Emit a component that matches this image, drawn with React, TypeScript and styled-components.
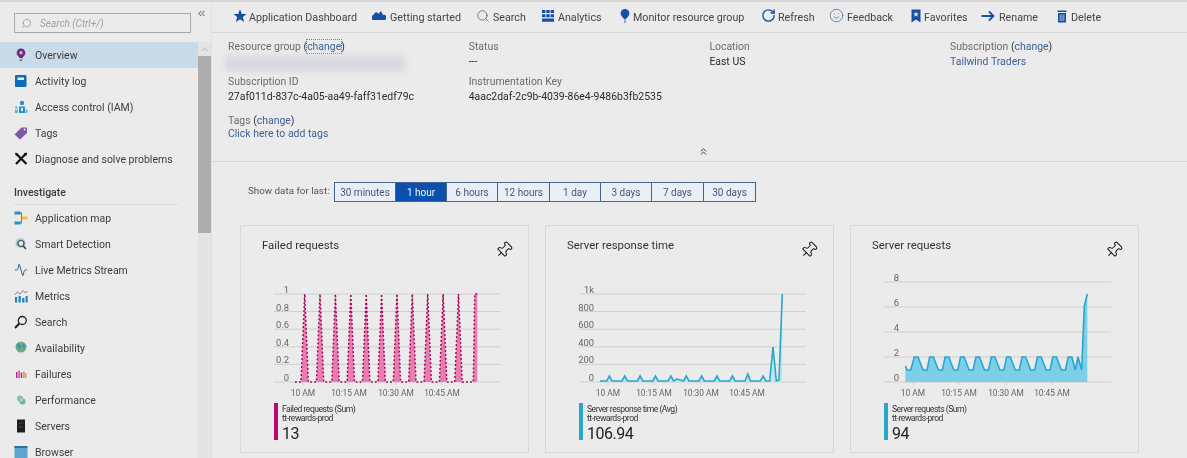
import React from 'react';
import styled, { createGlobalStyle } from 'styled-components';
import { Activity, ChevronUp, ChevronsLeft, ChevronsUp, Pin, RotateCw, Search as SearchIcon, Smile } from 'lucide-react';

const GlobalStyle = createGlobalStyle`
  html, body { margin: 0; padding: 0; background: #ebebeb; }
  body { font-family: Roboto, "Noto Sans", Arial, sans-serif; color: #333; }
  * { box-sizing: border-box; }
`;

const Page = styled.div`
  display: flex;
  width: 1187px;
  height: 458px;
  overflow: hidden;
  background: #ebebeb;
  border-top: 2px solid #d6d6d6;
  filter: blur(0.3px);
`;

const Sidebar = styled.aside`
  display: flex;
  flex: 0 0 212px;
  flex-direction: column;
  height: 456px;
  overflow: hidden;
  border-right: 1px solid #e0e0e0;
`;

const SearchRow = styled.div`
  display: flex;
  flex: 0 0 40px;
  align-items: flex-start;
  padding: 11px 0 0 14px;
`;

const SearchBox = styled.div`
  display: flex;
  align-items: center;
  gap: 8px;
  width: 177px;
  height: 20px;
  padding-left: 6px;
  border: 1px solid #a9a9a9;
  color: #a0a0a0;
  font-size: 10px;
  font-style: italic;
`;

const Collapse = styled.span`
  display: flex;
  margin: -5px 0 0 5px;
  color: #444;
`;

const SideBody = styled.div`
  display: flex;
  flex: 0 0 auto;
`;

const NavList = styled.nav`
  flex: 0 0 198px;
  display: flex;
  flex-direction: column;
`;

const NavItem = styled.div<{ $active?: boolean }>`
  display: flex;
  flex: 0 0 26px;
  align-items: center;
  gap: 7px;
  padding-left: 14px;
  background: ${(p) => (p.$active ? '#c9dbe9' : 'transparent')};
  color: #3c3c3c;
  font-size: 10.5px;
  white-space: nowrap;
`;

const NavIcon = styled.svg`
  flex: 0 0 14px;
  width: 14px;
  height: 14px;
`;

const NavHeading = styled.div`
  margin: 14px 20px 0 14px;
  padding-bottom: 5px;
  border-bottom: 1px solid #dcdcdc;
  color: #3c3c3c;
  font-size: 10.5px;
  font-weight: 500;
`;

const ScrollTrack = styled.div`
  flex: 0 0 13px;
  display: flex;
  flex-direction: column;
  background: #e4e4e4;
`;

const ScrollArrow = styled.div`
  display: flex;
  flex: 0 0 14px;
  align-items: center;
  justify-content: center;
  color: #b5b5b5;
`;

const ScrollThumb = styled.div`
  flex: 0 0 177px;
  background: #adadad;
`;

const Main = styled.main`
  flex: 1;
  min-width: 0;
  display: flex;
  flex-direction: column;
`;

const Toolbar = styled.div`
  display: flex;
  flex: 0 0 31px;
  align-items: center;
  padding: 0 0 0 21px;
  border-bottom: 1px solid #d9d9d9;
`;

const ToolButton = styled.div<{ $width: number; $gap: number }>`
  display: flex;
  flex: 0 0 ${(p) => p.$width}px;
  align-items: center;
  gap: ${(p) => p.$gap}px;
  color: #444;
  font-size: 10.7px;
  white-space: nowrap;
`;

const ToolIcon = styled.svg`
  flex: none;
  width: 14px;
  height: 14px;
  margin-top: -3px;
  color: #1450a8;
`;

const Essentials = styled.section`
  display: grid;
  flex: 0 0 81px;
  grid-template-columns: repeat(4, 240.7px);
  grid-auto-rows: 35px;
  padding: 7px 0 0 16px;
  font-size: 10.45px;
  line-height: 14.5px;
`;

const Field = styled.div``;

const FieldLabel = styled.div`
  color: #6b6b6b;
`;

const FieldValue = styled.div`
  color: #2b2b2b;
`;

const Paren = styled.span`
  color: #333;
`;

const LinkText = styled.a<{ $focus?: boolean }>`
  color: #3f6297;
  outline: ${(p) => (p.$focus ? '1px dotted #5b87a8' : 'none')};
`;

const BlurredValue = styled.div`
  width: 180px;
  height: 15px;
  margin: 1px 0 0 -3px;
  background: #d6d8de;
  filter: blur(3px);
`;

const TagsBlock = styled.div`
  flex: 0 0 32px;
  padding-left: 16px;
  font-size: 10.45px;
  line-height: 13px;
`;

const Expander = styled.div`
  display: flex;
  flex: 0 0 16px;
  justify-content: center;
  align-items: flex-start;
  padding-left: 8px;
  border-bottom: 1px solid #d9d9d9;
  color: #333;
`;

const RangeRow = styled.div`
  display: flex;
  flex: 0 0 40px;
  align-items: flex-start;
  padding: 20px 0 0 36px;
`;

const RangeLabel = styled.span`
  width: 86px;
  margin-top: 3px;
  color: #555;
  font-size: 9.8px;
`;

const RangeGroup = styled.div`
  display: flex;
  border: 1px solid #44658f;
  height: 20px;
`;

const RangeButton = styled.div<{ $active?: boolean; $width: number }>`
  display: flex;
  flex: 0 0 ${(p) => p.$width}px;
  align-items: center;
  justify-content: center;
  border-left: 1px solid #44658f;
  background: ${(p) => (p.$active ? '#0b50ad' : '#e9eff5')};
  color: ${(p) => (p.$active ? '#f4f7fb' : '#41587c')};
  font-size: 10px;

  &:first-child {
    border-left: 0;
  }
`;

const CardRow = styled.div`
  display: flex;
  flex: 0 0 auto;
  gap: 16px;
  margin-top: 23px;
  padding-left: 28px;
`;

const Card = styled.article`
  flex: 0 0 289px;
  height: 228px;
  border: 1px solid #d8d8d8;
`;

const CardHeader = styled.header`
  display: flex;
  height: 42px;
  align-items: flex-start;
  justify-content: space-between;
  padding: 12px 15px 0 21px;
`;

const CardTitle = styled.h3`
  margin: 0;
  color: #333;
  font-size: 11.4px;
  font-weight: 400;
`;

const PinIcon = styled(Pin)`
  margin-top: 3px;
  color: #111;
  transform: rotate(45deg);
`;

const ChartSvg = styled.svg`
  display: block;
  width: 287px;
  height: 134px;
`;

const AxisText = styled.text<{ $small?: boolean }>`
  fill: #666;
  font-size: ${(p) => (p.$small ? 8.4 : 9.4)}px;
`;

const Legend = styled.div`
  display: flex;
  gap: 4px;
  height: 37px;
  margin: 1px 0 0 33px;
`;

const LegendBar = styled.div<{ $color: string }>`
  flex: 0 0 4px;
  background: ${(p) => p.$color};
`;

const LegendText = styled.div`
  padding-top: 2px;
  color: #333;
  font-size: 8.6px;
  line-height: 9px;
  letter-spacing: -0.5px;
`;

const LegendValue = styled.div`
  margin-top: 2px;
  color: #222;
  font-size: 16px;
  line-height: 18px;
  letter-spacing: -0.5px;
`;

const Y0 = 114;
const toX = (z: number) => z / 3 - 5;
const period = 46.15;
const bumps = Array.from({ length: 11 }, (_, i) => 205 + i * period);

const failedPath = () => {
  const pts: string[] = ['54,114'];
  bumps.forEach((z) => {
    pts.push(`${toX(z - 10).toFixed(1)},114`, `${toX(z + 1).toFixed(1)},26`, `${toX(z + 12).toFixed(1)},114`);
  });
  pts.push(`${toX(712).toFixed(1)},114`, `${toX(716).toFixed(1)},26`, `${toX(724).toFixed(1)},26`);
  return pts;
};

const responsePath = () => {
  const pts: string[] = ['54,113'];
  bumps.forEach((z, i) => {
    pts.push(`${toX(z - 8).toFixed(1)},113`, `${toX(z).toFixed(1)},${i === 9 ? 106 : 108}`, `${toX(z + 8).toFixed(1)},113`);
    if (i === 4) pts.push(`${toX(z + 19).toFixed(1)},111`);
  });
  pts.push(`${toX(686).toFixed(1)},113`, `${toX(696).toFixed(1)},79`, `${toX(706).toFixed(1)},113`, `${toX(714).toFixed(1)},112`, `${toX(724).toFixed(1)},26`);
  return pts;
};

const requestsPath = () => {
  const pts: string[] = [`${toX(178).toFixed(1)},98`, `${toX(184).toFixed(1)},102`, `${toX(194).toFixed(1)},102`];
  bumps.forEach((z, i) => {
    pts.push(`${toX(z).toFixed(1)},89`, `${toX(z + 11).toFixed(1)},89`);
    if (i < 10) pts.push(`${toX(z + 26).toFixed(1)},102`, `${toX(z + 38).toFixed(1)},102`);
  });
  pts.push(`${toX(688).toFixed(1)},102`, `${toX(696).toFixed(1)},89`, `${toX(707).toFixed(1)},102`, `${toX(715).toFixed(1)},38`, `${toX(724).toFixed(1)},26`);
  return pts;
};

type ChartProps = {
  yLabels: { text: string; y: number }[];
  points: string[];
  fill?: string;
  stroke: string;
  dotted?: boolean;
};

const Chart: React.FC<ChartProps> = ({ yLabels, points, fill, stroke, dotted }) => {
  const first = points[0].split(',')[0];
  const last = points[points.length - 1].split(',')[0];
  return (
    <ChartSvg viewBox="0 0 287 134">
      {yLabels.map((l) => (
        <g key={l.text}>
          <line x1="33" x2="260" y1={l.y} y2={l.y} stroke="#cfcfcf" strokeWidth="1" />
          <AxisText x="48" y={l.y - 1} textAnchor="end">{l.text}</AxisText>
        </g>
      ))}
      {[62, 108, 155, 201].map((x) => (
        <line key={x} x1={x} x2={x} y1={Y0} y2={Y0 + 3} stroke="#cfcfcf" />
      ))}
      {fill && <polygon points={`${first},${Y0} ${points.join(' ')} ${last},${Y0}`} fill={fill} />}
      <polyline
        points={points.join(' ')}
        fill="none"
        stroke={stroke}
        strokeWidth={dotted ? 1.5 : 1.6}
        strokeDasharray={dotted ? '1.8 2.2' : undefined}
      />
      {[['10 AM', 62], ['10:15 AM', 108], ['10:30 AM', 155], ['10:45 AM', 201]].map(([t, x]) => (
        <AxisText key={t} $small x={x} y="128" textAnchor="middle">{t}</AxisText>
      ))}
    </ChartSvg>
  );
};

const Glyph = ({ name }: { name: string }) => {
  switch (name) {
    case 'overview':
      return (
        <NavIcon viewBox="0 0 14 14">
          <path d="M7 0.5a4.3 4.3 0 0 1 2.6 7.7L8.6 10H5.4L4.4 8.2A4.3 4.3 0 0 1 7 0.5z" fill="#6b2a7d" />
          <circle cx="7" cy="4.7" r="1.7" fill="#d9a6d9" />
          <rect x="5.6" y="10.8" width="2.8" height="2.4" fill="#8b8b8b" />
        </NavIcon>
      );
    case 'log':
      return (
        <NavIcon viewBox="0 0 14 14">
          <rect x="1" y="1" width="11.5" height="12" rx="1" fill="#0f6cb5" />
          <rect x="3.5" y="3.5" width="6.5" height="2.5" fill="#e8f1f8" />
        </NavIcon>
      );
    case 'access':
      return (
        <NavIcon viewBox="0 0 14 14">
          <circle cx="8" cy="3" r="2.2" fill="#2f8fc2" />
          <path d="M5 6.5h6v6.5H5z" fill="#2f8fc2" />
          <path d="M7 8h2v3H7z" fill="#e8f1f8" />
          <circle cx="2.3" cy="7.5" r="1.2" fill="#5fb4d8" />
          <path d="M0.8 9.5h3V13h-3z" fill="#5fb4d8" />
          <path d="M11.5 9.5h2V13h-2z" fill="#5fb4d8" />
        </NavIcon>
      );
    case 'tags':
      return (
        <NavIcon viewBox="0 0 14 14">
          <path d="M0.5 8.5 7.5 1.5h5.5v5.5l-7 6.5z" fill="#7b5aa6" />
          <circle cx="10.6" cy="3.6" r="1" fill="#ebebeb" />
        </NavIcon>
      );
    case 'diagnose':
      return (
        <NavIcon viewBox="0 0 14 14">
          <path d="M2 1.5 12.5 12M12 1.5 2 12" stroke="#111" strokeWidth="2.2" fill="none" />
          <path d="M9.5 1.5 13 0.5l-0.5 3.5z M1 0.5l3 1.5-2 2z" fill="#111" />
        </NavIcon>
      );
    case 'map':
      return (
        <NavIcon viewBox="0 0 14 14">
          <rect x="0.5" y="0.5" width="6" height="3" fill="#2a8fc7" />
          <rect x="0.5" y="10.5" width="6" height="3" fill="#2a8fc7" />
          <rect x="8" y="5.5" width="5.5" height="3" fill="#edc33c" />
          <path d="M6 2h1.5v10H6M7.5 7H8" stroke="#5a5a5a" strokeWidth="0.8" fill="none" />
        </NavIcon>
      );
    case 'smart':
      return (
        <NavIcon viewBox="0 0 14 14">
          <circle cx="6.5" cy="6" r="5" fill="#b4c7c9" />
          <circle cx="7" cy="6.5" r="3" fill="#e3ecec" stroke="#33505c" strokeWidth="1.2" />
          <path d="M9.2 9 12 12" stroke="#33505c" strokeWidth="1.8" />
        </NavIcon>
      );
    case 'live':
      return <Activity size={14} color="#27618f" strokeWidth={1.6} style={{ flex: 'none' }} />;
    case 'metrics':
      return (
        <NavIcon viewBox="0 0 14 14">
          <path d="M1 8v5.5h2.2V8zM4.6 7v6.5h2.2V7zM8.2 9v4.5h2.2V9zM11.6 7v6.5h2V7z" fill="#1f7fbf" />
          <path d="M0.5 6 3.5 3 6 5 9 1.5 11.5 4 13.5 2" stroke="#a25a7d" strokeWidth="0.9" fill="none" />
        </NavIcon>
      );
    case 'search':
      return (
        <NavIcon viewBox="0 0 14 14">
          <circle cx="8.3" cy="5.5" r="4" fill="none" stroke="#222" strokeWidth="1.3" />
          <path d="M5.3 8.5 1 13" stroke="#222" strokeWidth="2" />
        </NavIcon>
      );
    case 'availability':
      return (
        <NavIcon viewBox="0 0 14 14">
          <circle cx="7" cy="6" r="5.5" fill="#6fae78" />
          <path d="M3 3c2-1 3 1 4 2s-1 3-2 3-2-3-2-5zM8 2c2 0 3 2 3 4l-2 1z" fill="#3f8fbf" />
          <path d="M3 11.5c2 1.5 6 1.5 8 0l-2 1.5H5z" fill="#e3dc5a" />
        </NavIcon>
      );
    case 'failures':
      return (
        <NavIcon viewBox="0 0 14 14">
          <path d="M2 5h1.4v6H2zM6.8 5.5h1.4V11H6.8z" fill="#c2187c" />
          <path d="M4.4 3.5h1.4V11H4.4z" fill="#9b4fa5" />
          <path d="M9.2 4.5h1.4V11H9.2zM11.2 6h1.2v5h-1.2z" fill="#e8833a" />
        </NavIcon>
      );
    case 'performance':
      return (
        <NavIcon viewBox="0 0 14 14">
          <circle cx="6" cy="5.5" r="3" fill="#8fb9b0" />
          <circle cx="8.5" cy="8.5" r="3" fill="#6bb5a5" />
          <circle cx="7.5" cy="7" r="1.2" fill="#d8e6e3" />
        </NavIcon>
      );
    case 'servers':
      return (
        <NavIcon viewBox="0 0 14 14">
          <rect x="3" y="0.5" width="8" height="13" fill="#1f1f1f" />
          <path d="M5 4h4M5 8h4" stroke="#555" strokeWidth="0.8" />
        </NavIcon>
      );
    default:
      return (
        <NavIcon viewBox="0 0 14 14">
          <rect x="0.5" y="1" width="13" height="12" fill="#5aa5d2" />
          <rect x="0.5" y="1" width="13" height="2" fill="#2f6f9f" />
        </NavIcon>
      );
  }
};

const SearchTool = styled(SearchIcon)`
  flex: none;
  margin-top: -3px;
  color: #34608f;
`;

const RefreshTool = styled(RotateCw)`
  flex: none;
  margin-top: -3px;
  color: #1450a8;
`;

const SmileTool = styled(Smile)`
  flex: none;
  margin-top: -3px;
  color: #34608f;
`;

const ToolGlyph = ({ name }: { name: string }) => {
  switch (name) {
    case 'star':
      return (
        <ToolIcon viewBox="0 0 14 14">
          <path d="M7 0.5 8.9 5h4.7l-3.8 3 1.4 5L7 10.2 2.8 13l1.4-5L.4 5h4.7z" fill="currentColor" />
        </ToolIcon>
      );
    case 'cloud':
      return (
        <ToolIcon viewBox="0 0 14 14">
          <path d="M1 11a2.6 2.6 0 0 1 .6-5 3.2 3.2 0 0 1 3.5-2.6l1.5 1.4L9 2l2 4a2.6 2.6 0 0 1 1.6 5z" fill="currentColor" />
        </ToolIcon>
      );
    case 'search':
      return <SearchTool size={14} strokeWidth={1.3} />;
    case 'grid':
      return (
        <ToolIcon viewBox="0 0 14 14">
          <path d="M1 1h3.4v3H1zM5.3 1h3.4v3H5.3zM9.6 1H13v3H9.6zM1 5.2h3.4v3H1zM5.3 5.2h3.4v3H5.3zM9.6 5.2H13v3H9.6zM1 9.4h12v3.4H1z" fill="currentColor" />
        </ToolIcon>
      );
    case 'pin':
      return (
        <ToolIcon viewBox="0 0 14 14">
          <path d="M7 0a4.4 4.4 0 0 1 4.4 4.4C11.4 7 8.5 8.6 8 10H6C5.5 8.6 2.6 7 2.6 4.4A4.4 4.4 0 0 1 7 0z" fill="currentColor" />
          <rect x="6" y="10.5" width="2" height="3.5" fill="#8aa6c8" />
        </ToolIcon>
      );
    case 'refresh':
      return <RefreshTool size={15} strokeWidth={2.2} />;
    case 'smile':
      return <SmileTool size={15} strokeWidth={1.1} />;
    case 'bookmark':
      return (
        <ToolIcon viewBox="0 0 14 14">
          <path d="M2.5 0.5h9v13L7 10.5 2.5 13.5z" fill="currentColor" />
          <path d="M7 2.5 7.8 4.4h2L8.2 5.7l.6 2L7 6.6 5.2 7.7l.6-2L4.2 4.4h2z" fill="#ebebeb" />
        </ToolIcon>
      );
    case 'arrow':
      return (
        <ToolIcon viewBox="0 0 14 14">
          <path d="M0.5 7h11.5M8 2.5 12.5 7 8 11.5" fill="none" stroke="currentColor" strokeWidth="1.8" />
        </ToolIcon>
      );
    default:
      return (
        <ToolIcon viewBox="0 0 14 14">
          <path d="M2.5 1.5h9v1.5h-9zM3 4h8v9.5H3z" fill="currentColor" />
          <path d="M5.2 5.5v6.5M7 5.5v6.5M8.8 5.5v6.5" stroke="#dfe8f3" strokeWidth="0.7" />
        </ToolIcon>
      );
  }
};

const tools = [
  { icon: 'star', label: 'Application Dashboard', width: 139, gap: 2 },
  { icon: 'cloud', label: 'Getting started', width: 104, gap: 4 },
  { icon: 'search', label: 'Search', width: 65, gap: 3 },
  { icon: 'grid', label: 'Analytics', width: 77, gap: 3 },
  { icon: 'pin', label: 'Monitor resource group', width: 143, gap: 1 },
  { icon: 'refresh', label: 'Refresh', width: 68, gap: 2 },
  { icon: 'smile', label: 'Feedback', width: 80, gap: 3 },
  { icon: 'bookmark', label: 'Favorites', width: 72, gap: 1 },
  { icon: 'arrow', label: 'Rename', width: 74, gap: 4 },
  { icon: 'trash', label: 'Delete', width: 60, gap: 2 },
];

const navTop = [
  { icon: 'overview', label: 'Overview', active: true },
  { icon: 'log', label: 'Activity log' },
  { icon: 'access', label: 'Access control (IAM)' },
  { icon: 'tags', label: 'Tags' },
  { icon: 'diagnose', label: 'Diagnose and solve problems' },
];

const navInvestigate = [
  { icon: 'map', label: 'Application map' },
  { icon: 'smart', label: 'Smart Detection' },
  { icon: 'live', label: 'Live Metrics Stream' },
  { icon: 'metrics', label: 'Metrics' },
  { icon: 'search', label: 'Search' },
  { icon: 'availability', label: 'Availability' },
  { icon: 'failures', label: 'Failures' },
  { icon: 'performance', label: 'Performance' },
  { icon: 'servers', label: 'Servers' },
  { icon: 'browser', label: 'Browser' },
];

const ranges = [
  { label: '30 minutes', width: 60 },
  { label: '1 hour', width: 51, active: true },
  { label: '6 hours', width: 51 },
  { label: '12 hours', width: 52 },
  { label: '1 day', width: 51 },
  { label: '3 days', width: 51 },
  { label: '7 days', width: 52 },
  { label: '30 days', width: 52 },
];

const fracLabels = ['1', '0.8', '0.6', '0.4', '0.2', '0'].map((text, i) => ({ text, y: 26 + i * 17.6 }));
const kLabels = ['1k', '800', '600', '400', '200', '0'].map((text, i) => ({ text, y: 26 + i * 17.6 }));
const reqLabels = ['8', '6', '4', '2', '0'].map((text, i) => ({ text, y: 14 + i * 25 }));

const App: React.FC = () => {
  return (
    <Page>
      <GlobalStyle />
      <Sidebar>
        <SearchRow>
          <SearchBox>
            <SearchIcon size={11} color="#a0a0a0" style={{ transform: 'scaleX(-1)' }} />
            <span>Search (Ctrl+/)</span>
          </SearchBox>
          <Collapse><ChevronsLeft size={11} /></Collapse>
        </SearchRow>
        <SideBody>
          <NavList>
            {navTop.map((n) => (
              <NavItem key={n.label} $active={n.active}>
                <Glyph name={n.icon} />
                {n.label}
              </NavItem>
            ))}
            <NavHeading>Investigate</NavHeading>
            {navInvestigate.map((n) => (
              <NavItem key={n.label}>
                <Glyph name={n.icon} />
                {n.label}
              </NavItem>
            ))}
          </NavList>
          <ScrollTrack>
            <ScrollArrow><ChevronUp size={11} /></ScrollArrow>
            <ScrollThumb />
          </ScrollTrack>
        </SideBody>
      </Sidebar>
      <Main>
        <Toolbar>
          {tools.map((t) => (
            <ToolButton key={t.label} $width={t.width} $gap={t.gap}>
              <ToolGlyph name={t.icon} />
              {t.label}
            </ToolButton>
          ))}
        </Toolbar>
        <Essentials>
          <Field>
            <FieldLabel>Resource group <Paren>(</Paren><LinkText $focus>change</LinkText><Paren>)</Paren></FieldLabel>
            <BlurredValue />
          </Field>
          <Field>
            <FieldLabel>Status</FieldLabel>
            <FieldValue>---</FieldValue>
          </Field>
          <Field>
            <FieldLabel>Location</FieldLabel>
            <FieldValue>East US</FieldValue>
          </Field>
          <Field>
            <FieldLabel>Subscription <Paren>(</Paren><LinkText>change</LinkText><Paren>)</Paren></FieldLabel>
            <FieldValue><LinkText>Tailwind Traders</LinkText></FieldValue>
          </Field>
          <Field>
            <FieldLabel>Subscription ID</FieldLabel>
            <FieldValue>27af011d-837c-4a05-aa49-faff31edf79c</FieldValue>
          </Field>
          <Field>
            <FieldLabel>Instrumentation Key</FieldLabel>
            <FieldValue>4aac2daf-2c9b-4039-86e4-9486b3fb2535</FieldValue>
          </Field>
        </Essentials>
        <TagsBlock>
          <FieldLabel>Tags <Paren>(</Paren><LinkText>change</LinkText><Paren>)</Paren></FieldLabel>
          <LinkText>Click here to add tags</LinkText>
        </TagsBlock>
        <Expander><ChevronsUp size={11} /></Expander>
        <RangeRow>
          <RangeLabel>Show data for last:</RangeLabel>
          <RangeGroup>
            {ranges.map((r) => (
              <RangeButton key={r.label} $width={r.width} $active={r.active}>{r.label}</RangeButton>
            ))}
          </RangeGroup>
        </RangeRow>
        <CardRow>
          <Card>
            <CardHeader>
              <CardTitle>Failed requests</CardTitle>
              <PinIcon size={18} strokeWidth={1.3} />
            </CardHeader>
            <Chart yLabels={fracLabels} points={failedPath()} fill="#ea7db0" stroke="#9c0055" dotted />
            <Legend>
              <LegendBar $color="#b8096e" />
              <LegendText>
                Failed requests (Sum)<br />tt-rewards-prod
                <LegendValue>13</LegendValue>
              </LegendText>
            </Legend>
          </Card>
          <Card>
            <CardHeader>
              <CardTitle>Server response time</CardTitle>
              <PinIcon size={18} strokeWidth={1.3} />
            </CardHeader>
            <Chart yLabels={kLabels} points={responsePath()} fill="#bfe5f2" stroke="#27a7c9" />
            <Legend>
              <LegendBar $color="#27a7c9" />
              <LegendText>
                Server response time (Avg)<br />tt-rewards-prod
                <LegendValue>106.94</LegendValue>
              </LegendText>
            </Legend>
          </Card>
          <Card>
            <CardHeader>
              <CardTitle>Server requests</CardTitle>
              <PinIcon size={18} strokeWidth={1.3} />
            </CardHeader>
            <Chart yLabels={reqLabels} points={requestsPath()} fill="#7dcfe8" stroke="#27a7cf" />
            <Legend>
              <LegendBar $color="#27a7c9" />
              <LegendText>
                Server requests (Sum)<br />tt-rewards-prod
                <LegendValue>94</LegendValue>
              </LegendText>
            </Legend>
          </Card>
        </CardRow>
      </Main>
    </Page>
  );
};

export default App;
